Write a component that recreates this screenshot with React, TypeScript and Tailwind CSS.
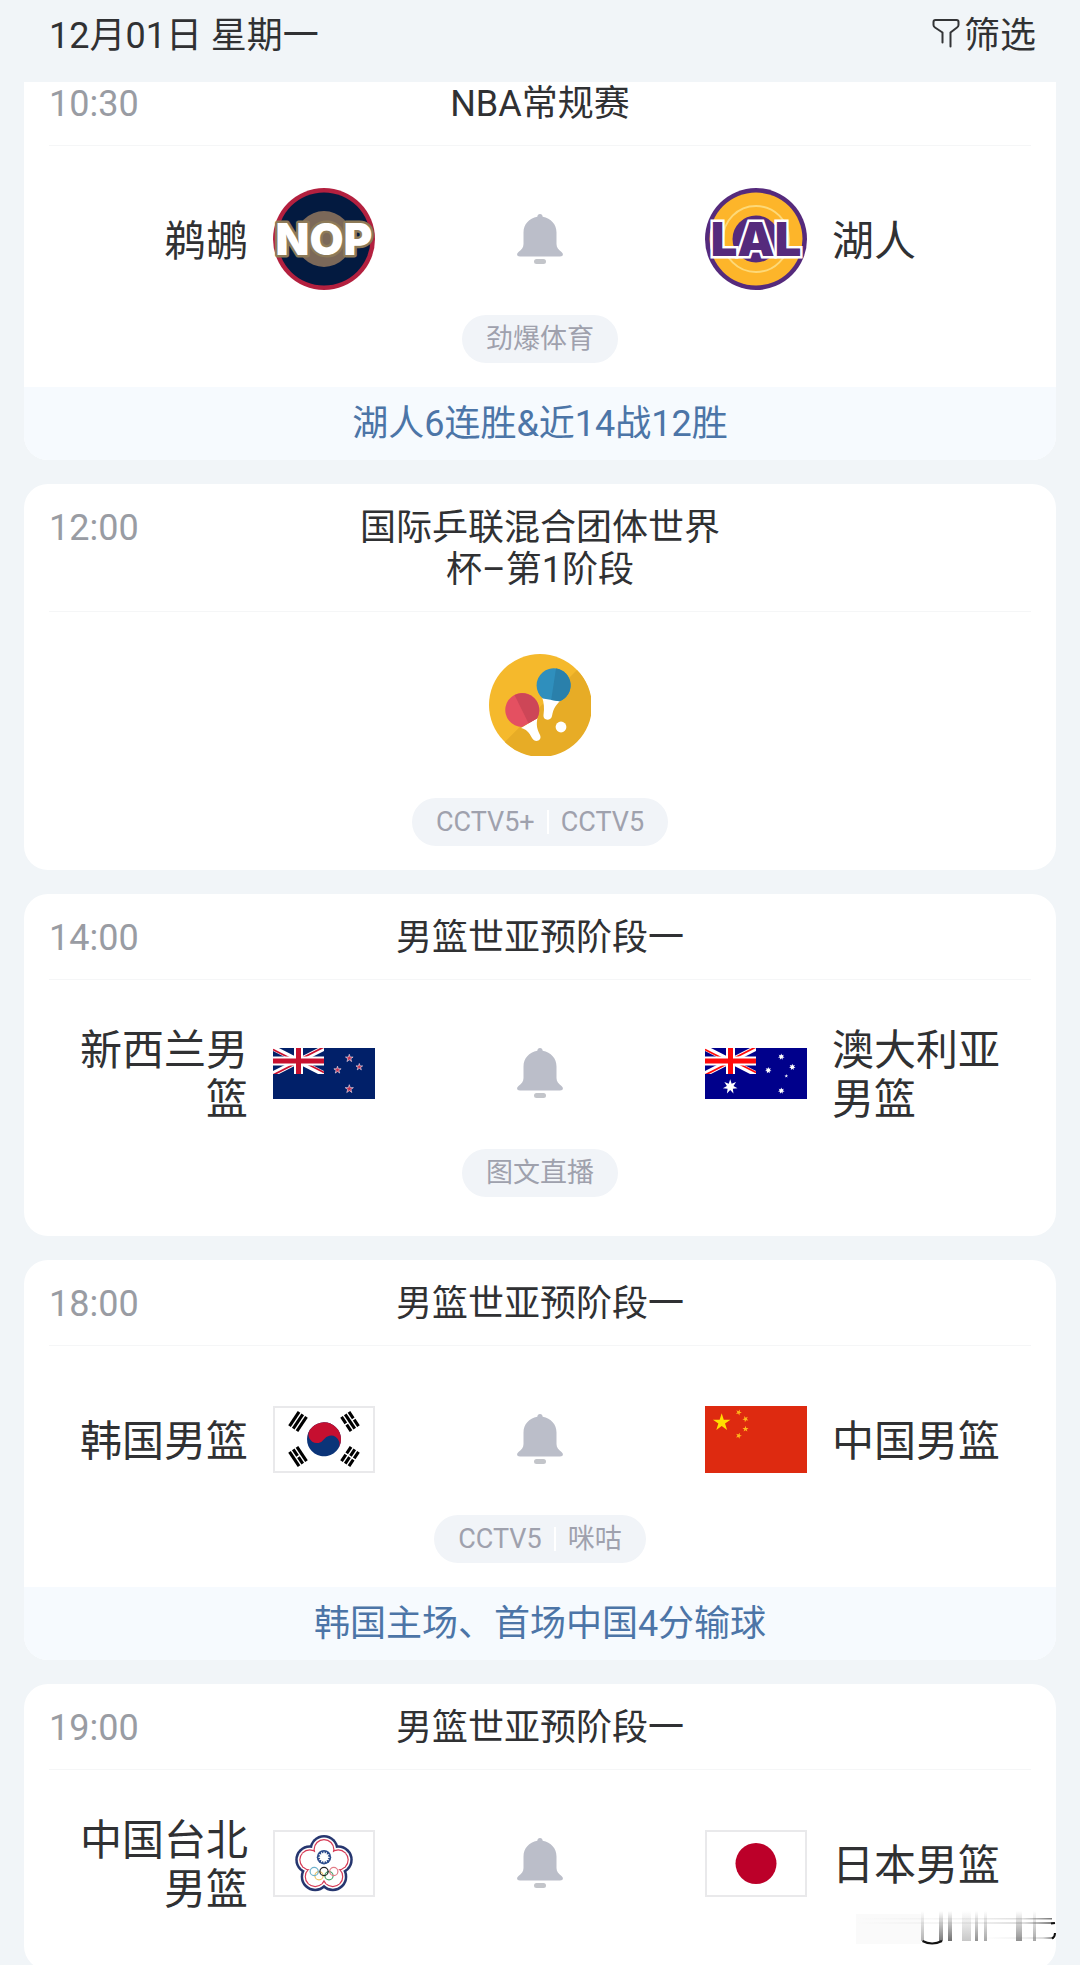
import React from "react";

type Team = { name: string; logo: React.ReactNode };

type Match = {
  time: string;
  title: string;
  home?: Team;
  away?: Team;
  emblem?: React.ReactNode;
  channels: string[];
  note?: string;
};

function starPoints(cx: number, cy: number, r: number, points = 5, inner = 0.382, rotate = 0) {
  const list: string[] = [];
  for (let i = 0; i < points * 2; i++) {
    const radius = i % 2 === 0 ? r : r * inner;
    const a = (Math.PI * i) / points - Math.PI / 2 + (rotate * Math.PI) / 180;
    list.push(`${(cx + radius * Math.cos(a)).toFixed(2)},${(cy + radius * Math.sin(a)).toFixed(2)}`);
  }
  return list.join(" ");
}

function FilterIcon() {
  return (
    <svg viewBox="0 0 28 36" className="h-9 w-7" fill="none" stroke="#333436" strokeWidth="2" strokeLinecap="round" strokeLinejoin="round" aria-hidden="true">
      <path d="M10.500 24.500V14.500L3 9.500Q1.500 8.500 1.500 7V4Q1.500 2 3.500 2H24.500Q26.500 2 26.500 4V7Q26.500 8.500 25 9.500L18.500 14.500V28.500" />
    </svg>
  );
}

function BellIcon() {
  return (
    <svg viewBox="0 0 46 50" className="h-[50px] w-[46px]" aria-hidden="true">
      <path
        d="M20.300 2.800C20.300 1.200 21.500 0 23 0s2.700 1.200 2.700 2.800C34 4.200 39.500 10.500 39.500 18.500V30C39.500 33.500 41.500 35.500 44.500 38C47 40.200 46 42.500 43 42.500H3C0 42.500-1 40.200 1.500 38C4.500 35.500 6.500 33.500 6.500 30V18.500C6.500 10.500 12 4.200 20.300 2.800Z"
        fill="#bbbec9"
      />
      <rect x="17" y="45" width="12" height="5" rx="2.500" fill="#c3c5ca" />
    </svg>
  );
}

function PelicansLogo() {
  return (
    <svg viewBox="0 0 102 102" className="size-[102px]" role="img" aria-label="NOP">
      <circle cx="51" cy="51" r="51" fill="#b3203f" />
      <circle cx="51" cy="51" r="46.500" fill="#031a40" />
      <circle cx="51" cy="51" r="28" fill="#7b6859" />
      <text x="51" y="67" textAnchor="middle" fontSize="44" fontWeight="900" fill="#ffffff" stroke="#8d7a58" strokeWidth="5" strokeLinejoin="round" paintOrder="stroke" fontFamily="Inter, sans-serif">
        NOP
      </text>
    </svg>
  );
}

function LakersLogo() {
  return (
    <svg viewBox="0 0 102 102" className="size-[102px]" role="img" aria-label="LAL">
      <circle cx="51" cy="51" r="51" fill="#552a7c" />
      <circle cx="51" cy="51" r="46.500" fill="#fdb52a" />
      <circle cx="51" cy="51" r="33" fill="none" stroke="#fdd978" strokeWidth="2" />
      <circle cx="51" cy="51" r="23.500" fill="#552a7c" />
      <text x="51" y="68" textAnchor="middle" fontSize="47" fontWeight="900" fill="#552a7c" stroke="#ffffff" strokeWidth="5" strokeLinejoin="miter" paintOrder="stroke" fontFamily="Inter, sans-serif">
        LAL
      </text>
    </svg>
  );
}

function PingPongLogo() {
  return (
    <svg viewBox="0 0 102 102" className="size-[102px]" role="img" aria-label="乒乓球">
      <circle cx="51" cy="51" r="51" fill="#f5b92c" />
      <path d="M88 15.900A51 51 0 0 1 15.800 88Z" fill="#e7ac26" />
      <path d="M53 43L71 47C67 51 64.500 54 63 62C62.500 66.500 54 67.500 54.500 61C55.500 54 55 49 53 43Z" fill="#ffffff" />
      <path d="M53.800 44.500A17 17 0 1 1 70.500 47.300Z" fill="#2f8fbd" />
      <path d="M67 14.500A17 17 0 0 1 70.500 47.300L62.200 46Z" fill="#2a80ab" />
      <path d="M32 74C37 75 40 78 43 84C46 89.500 53.500 86.500 51 81C48 75 47 71 48.500 64Z" fill="#ffffff" />
      <path d="M33 73A17 17 0 1 1 48 64.500Z" fill="#e45061" />
      <path d="M25.500 41A17 17 0 0 1 48 64.500L39.500 69.300Z" fill="#cd4657" />
      <circle cx="72" cy="73" r="5.400" fill="#ffffff" />
    </svg>
  );
}

function UnionJack({ id, red, blue }: { id: string; red: string; blue: string }) {
  return (
    <g clipPath={`url(#${id})`}>
      <clipPath id={id}>
        <rect width="51" height="26" />
      </clipPath>
      <rect width="51" height="26" fill={blue} />
      <path d="M0 0L51 26M51 0L0 26" stroke="#ffffff" strokeWidth="5.400" />
      <path d="M0 1.500L25.500 14.500M51 24.500L25.500 11.500M0 27L25.500 14M51-1L25.500 12" stroke={red} strokeWidth="1.800" />
      <path d="M25.500 0V26M0 13H51" stroke="#ffffff" strokeWidth="9" />
      <path d="M25.500 0V26M0 13H51" stroke={red} strokeWidth="5" />
    </g>
  );
}

function NewZealandFlag() {
  const stars = [
    [76.300, 10.300, 4],
    [64.500, 22, 3.800],
    [86.300, 19, 3.500],
    [76.300, 41, 4.300],
  ];
  return (
    <svg viewBox="0 0 102 51" className="h-[51px] w-[102px]" role="img" aria-label="新西兰">
      <rect width="102" height="51" fill="#012069" />
      <UnionJack id="jack-nz" red="#c8102e" blue="#012069" />
      {stars.map(([x, y, r]) => (
        <polygon key={`${x}-${y}`} points={starPoints(x, y, r)} fill="#c8304e" stroke="#e8d5e4" strokeWidth="0.700" />
      ))}
    </svg>
  );
}

function AustraliaFlag() {
  const stars = [
    [76.300, 8.700, 3.300],
    [63.300, 22.300, 3.300],
    [87.300, 19, 3.300],
    [76.300, 42.700, 3.300],
  ];
  return (
    <svg viewBox="0 0 102 51" className="h-[51px] w-[102px]" role="img" aria-label="澳大利亚">
      <rect width="102" height="51" fill="#00008b" />
      <UnionJack id="jack-au" red="#ff0a0a" blue="#00008b" />
      <polygon points={starPoints(25.200, 38.700, 7.500, 7, 0.45)} fill="#ffffff" />
      {stars.map(([x, y, r]) => (
        <polygon key={`${x}-${y}`} points={starPoints(x, y, r, 7, 0.5)} fill="#ffffff" />
      ))}
      <polygon points={starPoints(81.300, 28, 2)} fill="#ffffff" />
    </svg>
  );
}

function Trigram({ x, y, angle, broken }: { x: number; y: number; angle: number; broken: boolean[] }) {
  return (
    <g transform={`translate(${x} ${y}) rotate(${angle})`} stroke="#000000" strokeWidth="3.100">
      {broken.map((b, i) => (
        <path key={i} d={b ? `M-8.500 ${(i - 1) * 4.500}H-0.800M0.800 ${(i - 1) * 4.500}H8.500` : `M-8.500 ${(i - 1) * 4.500}H8.500`} />
      ))}
    </g>
  );
}

function KoreaFlag() {
  return (
    <svg viewBox="0 0 102 67" className="h-[67px] w-[102px]" role="img" aria-label="韩国">
      <rect x="1" y="1" width="100" height="65" fill="#ffffff" stroke="#e9e9eb" strokeWidth="2" />
      <g transform="rotate(33.700 51 33.300)">
        <circle cx="51" cy="33.300" r="17" fill="#0b3478" />
        <path d="M34 33.300A17 17 0 0 1 68 33.300A8.500 8.500 0 0 0 51 33.300A8.500 8.500 0 0 1 34 33.300Z" fill="#c60f30" />
      </g>
      <Trigram x={25} y={15.500} angle={-56} broken={[false, false, false]} />
      <Trigram x={77} y={15.500} angle={56} broken={[true, false, true]} />
      <Trigram x={25} y={50.500} angle={56} broken={[false, true, false]} />
      <Trigram x={77} y={50.500} angle={-56} broken={[true, true, true]} />
    </svg>
  );
}

function ChinaFlag() {
  return (
    <svg viewBox="0 0 102 67" className="h-[67px] w-[102px]" role="img" aria-label="中国">
      <rect width="102" height="67" fill="#de2a10" />
      <polygon points={starPoints(16.700, 16.500, 9.200)} fill="#ffde00" />
      <polygon points={starPoints(33.700, 6.400, 3.200, 5, 0.4, 24)} fill="#ffb81c" />
      <polygon points={starPoints(40.500, 13, 3.200, 5, 0.4, 46)} fill="#ffb81c" />
      <polygon points={starPoints(40.500, 23, 3.200, 5, 0.4, 0)} fill="#ffb81c" />
      <polygon points={starPoints(33.700, 29.700, 3.200, 5, 0.4, 20)} fill="#ffb81c" />
    </svg>
  );
}

function Blossom({ r, fill }: { r: number; fill: string }) {
  return (
    <g fill={fill}>
      {[0, 1, 2, 3, 4].map((i) => {
        const a = (i * 72 - 90) * (Math.PI / 180);
        return <circle key={i} cx={51 + 15 * Math.cos(a)} cy={34.500 + 15 * Math.sin(a)} r={r} />;
      })}
      <circle cx="51" cy="34.500" r="15" />
    </g>
  );
}

function ChineseTaipeiFlag() {
  return (
    <svg viewBox="0 0 102 67" className="h-[67px] w-[102px]" role="img" aria-label="中国台北">
      <rect x="1" y="1" width="100" height="65" fill="#ffffff" stroke="#e9e9eb" strokeWidth="2" />
      <Blossom r={14.500} fill="#26366f" />
      <Blossom r={12} fill="#ffffff" />
      <Blossom r={10.500} fill="#d63a55" />
      <Blossom r={9.300} fill="#ffffff" />
      <circle cx="51" cy="27.200" r="7.200" fill="#2c4c8c" />
      <polygon points={starPoints(51, 27.200, 6.200, 12, 0.62)} fill="#ffffff" />
      <g fill="none" strokeWidth="1.200">
        <circle cx="46" cy="45.800" r="4.100" stroke="#f0c466" />
        <circle cx="56" cy="45.800" r="4.100" stroke="#4ba36a" />
        <circle cx="41.200" cy="41.500" r="4.100" stroke="#6fb2cc" />
        <circle cx="51" cy="41.500" r="4.100" stroke="#222222" />
        <circle cx="60.800" cy="41.500" r="4.100" stroke="#e27c86" />
      </g>
    </svg>
  );
}

function JapanFlag() {
  return (
    <svg viewBox="0 0 102 67" className="h-[67px] w-[102px]" role="img" aria-label="日本">
      <rect x="1" y="1" width="100" height="65" fill="#ffffff" stroke="#e9e9eb" strokeWidth="2" />
      <circle cx="51" cy="33.500" r="20.500" fill="#bc0029" />
    </svg>
  );
}

/* Faded vertical strokes at the lower right corner of the list. */
function Smudge() {
  const bars: [number, number, number][] = [
    [65, 3, 0.35],
    [83, 4, 0.6],
    [92, 4, 0.65],
    [106, 9, 0.25],
    [119, 3, 0.5],
    [128, 3, 0.4],
    [160, 6, 0.5],
    [177, 3, 0.4],
  ];
  return (
    <svg viewBox="0 0 200 36" className="h-9 w-[200px]" aria-hidden="true">
      <defs>
        <linearGradient id="fade-down" x1="0" y1="0" x2="0" y2="1">
          <stop offset="0" stopColor="#222" stopOpacity="0" />
          <stop offset="1" stopColor="#222" stopOpacity="1" />
        </linearGradient>
        <linearGradient id="fade-right" x1="0" y1="0" x2="1" y2="0">
          <stop offset="0" stopColor="#777" stopOpacity="0" />
          <stop offset="0.600" stopColor="#777" stopOpacity="0.100" />
          <stop offset="0.850" stopColor="#777" stopOpacity="0.250" />
          <stop offset="1" stopColor="#555" stopOpacity="0.800" />
        </linearGradient>
      </defs>
      <rect y="4" width="65" height="30" fill="#fafafa" />
      {bars.map(([x, w, o]) => (
        <rect key={x} x={x} y="1" width={w} height="30" fill="url(#fade-down)" opacity={o} />
      ))}
      <rect x="0" y="8" width="196" height="1.500" fill="url(#fade-right)" />
      <rect x="0" y="12" width="198" height="2" fill="url(#fade-right)" />
      <rect x="125" y="27" width="73" height="2" fill="url(#fade-right)" />
      <path d="M66.500 31Q76 36 86 31" fill="none" stroke="#111" strokeWidth="2" />
      <path d="M195 13.500L199 13M199 23Q199 27 196 28.500" fill="none" stroke="#111" strokeWidth="2" />
    </svg>
  );
}

const matches: Match[] = [
  {
    time: "10:30",
    title: "NBA常规赛",
    home: { name: "鹈鹕", logo: <PelicansLogo /> },
    away: { name: "湖人", logo: <LakersLogo /> },
    channels: ["劲爆体育"],
    note: "湖人6连胜&近14战12胜",
  },
  {
    time: "12:00",
    title: "国际乒联混合团体世界杯–第1阶段",
    emblem: <PingPongLogo />,
    channels: ["CCTV5+", "CCTV5"],
  },
  {
    time: "14:00",
    title: "男篮世亚预阶段一",
    home: { name: "新西兰男篮", logo: <NewZealandFlag /> },
    away: { name: "澳大利亚男篮", logo: <AustraliaFlag /> },
    channels: ["图文直播"],
  },
  {
    time: "18:00",
    title: "男篮世亚预阶段一",
    home: { name: "韩国男篮", logo: <KoreaFlag /> },
    away: { name: "中国男篮", logo: <ChinaFlag /> },
    channels: ["CCTV5", "咪咕"],
    note: "韩国主场、首场中国4分输球",
  },
  {
    time: "19:00",
    title: "男篮世亚预阶段一",
    home: { name: "中国台北男篮", logo: <ChineseTaipeiFlag /> },
    away: { name: "日本男篮", logo: <JapanFlag /> },
    channels: [],
  },
];

function Channels({ items }: { items: string[] }) {
  return (
    <div className="flex h-12 items-center gap-3 rounded-full bg-[#f1f4f8] px-6 text-[27px] leading-[42px] text-[#9fa1ad]">
      {items.map((item, i) => (
        <React.Fragment key={item}>
          {i > 0 && <span className="h-6 w-0.5 bg-white" />}
          <span>{item}</span>
        </React.Fragment>
      ))}
    </div>
  );
}

function MatchCard({ match, first }: { match: Match; first: boolean }) {
  const { home, away, emblem, channels, note } = match;
  const bottom = channels.length === 0 ? "pb-[56px]" : note || emblem ? "pb-6" : "pb-[39px]";
  return (
    <article className={`relative overflow-hidden bg-white ${first ? "rounded-b-3xl" : "rounded-3xl"}`}>
      <header className={`mx-[25px] flex border-b border-[#f5f6f7] pb-5 text-[36px] leading-[42px] ${first ? "pt-px" : "pt-[23px]"}`}>
        <time className="flex-1 text-[#999ca3]">{match.time}</time>
        <h2 className="w-[380px] text-center">{match.title}</h2>
        <span className="flex-1" />
      </header>
      <div className={`flex flex-col items-center px-[25px] pt-[42px] ${bottom}`}>
        {home && away ? (
          <div className="flex h-[102px] w-full items-center gap-[25px] text-[42px] leading-[49px]">
            <span className="flex-1 pt-1 text-right">{home.name}</span>
            {home.logo}
            <div className="flex w-[280px] justify-center">
              <button type="button" aria-label="提醒">
                <BellIcon />
              </button>
            </div>
            {away.logo}
            <span className="flex-1 pt-1">{away.name}</span>
          </div>
        ) : (
          emblem
        )}
        {channels.length > 0 && (
          <div className={emblem ? "mt-[42px]" : "mt-[25px]"}>
            <Channels items={channels} />
          </div>
        )}
      </div>
      {note && <p className="bg-[#f6fafe] pt-4 pb-[15px] text-center text-[36px] leading-[42px] text-[#4c75a7]">{note}</p>}
      {channels.length === 0 && (
        <div className="absolute right-0 bottom-6">
          <Smudge />
        </div>
      )}
    </article>
  );
}

export default function App() {
  return (
    <div className="flex h-screen flex-col overflow-hidden bg-[#f1f5f8] font-[Roboto,'Noto_Sans_CJK_SC',sans-serif] text-[#303133]">
      <header className="flex shrink-0 items-center justify-between pt-[15px] pr-11 pb-[25px] pl-[49px] text-[36px] leading-[42px]">
        <h1>12月01日 星期一</h1>
        <button type="button" className="flex items-center gap-1">
          <FilterIcon />
          <span>筛选</span>
        </button>
      </header>
      <main className="min-h-0 flex-1 overflow-hidden px-6">
        <div className="flex flex-col gap-6">
          {matches.map((m, i) => (
            <MatchCard key={m.time} match={m} first={i === 0} />
          ))}
        </div>
      </main>
    </div>
  );
}
